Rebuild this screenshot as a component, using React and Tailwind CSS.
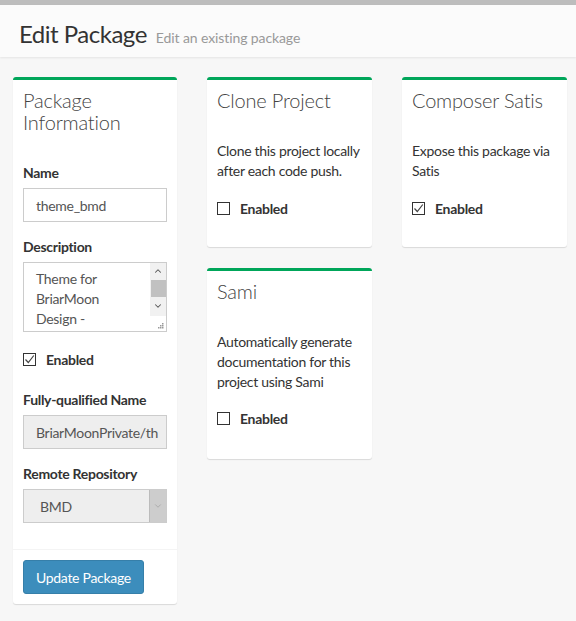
import { ChevronDown, ChevronUp } from 'lucide-react'

const FONT = { fontFamily: 'Lato, "Open Sans", sans-serif' }

function CheckBox({ checked }) {
  return (
    <span className="w-[13px] h-[13px] border border-[#333] bg-white flex items-center justify-center flex-shrink-0">
      {checked && (
        <svg width="11" height="11" viewBox="0 0 11 11" fill="none">
          <path d="M1.5 5.5 L4.3 8.5 L9.8 1.5" stroke="#444" strokeWidth="1.2" />
        </svg>
      )}
    </span>
  )
}

function EnabledRow({ checked }) {
  return (
    <div className="flex items-center gap-[10px] h-[20px]">
      <CheckBox checked={checked} />
      <span className="text-[14px] font-bold text-[#333]">Enabled</span>
    </div>
  )
}

function Box({ title, children, className = '' }) {
  return (
    <div className={`bg-white rounded-[3px] border-t-[3px] border-[#00a65a] shadow-[0_1px_1px_rgba(0,0,0,0.12)] ${className}`}>
      <div className="px-[10px] pt-[9px]">
        <h3 className="text-[20px] leading-[22px] font-light tracking-[-0.2px] text-[#444]">{title}</h3>
      </div>
      {children}
    </div>
  )
}

function Label({ children }) {
  return <p className="text-[14px] leading-[20px] font-bold text-[#333] mb-[5px]">{children}</p>
}

export default function App() {
  return (
    <div className="w-[576px] h-[621px] bg-[#f7f7f7] overflow-hidden text-[#333] tracking-[-0.3px]" style={FONT}>
      <div className="h-[5px] bg-[#bdbdbd]" />
      {/* Content header */}
      <div className="h-[52px] bg-[#fbfbfb] shadow-[0_1px_2px_rgba(0,0,0,0.08)] flex items-baseline pl-[19px] pt-[15px]">
        <h1 className="text-[24px] leading-[28px] tracking-[-0.5px] text-[#333]">Edit Package</h1>
        <small className="ml-[9px] text-[14px] tracking-[-0.1px] text-[#999]">Edit an existing package</small>
      </div>

      <div className="flex items-start gap-[30px] pl-[13px] pt-[20px]">
        {/* Package information */}
        <Box title={<>Package<br />Information</>} className="w-[164px]">
          <div className="px-[10px] pt-[30px]">
            <Label>Name</Label>
            <div className="h-[34px] border border-[#ccc] flex items-center px-[12px] text-[14px] text-[#555]">theme_bmd</div>

            <div className="mt-[15px]">
              <Label>Description</Label>
            </div>
            <div className="h-[70px] border border-[#ccc] flex">
              <div className="flex-1 pl-[12px] pt-[6px] text-[14px] leading-[20px] text-[#555] overflow-hidden">
                Theme for<br />BriarMoon<br />Design -
              </div>
              <div className="w-[16px] flex flex-col">
                <div className="h-[53px] bg-[#f1f1f1] flex flex-col items-center">
                  <ChevronUp size={10} strokeWidth={2.5} className="text-[#555] mt-[3px]" />
                  <div className="w-[15px] h-[17px] bg-[#c1c1c1] mt-[4px]" />
                  <ChevronDown size={10} strokeWidth={2.5} className="text-[#555] mt-[4px]" />
                </div>
                <div className="flex-1 flex items-end justify-end pr-[2px] pb-[2px]">
                  <svg width="7" height="7" viewBox="0 0 7 7">
                    <rect x="5" y="1" width="1.5" height="1.5" fill="#999" />
                    <rect x="3" y="3" width="1.5" height="1.5" fill="#999" />
                    <rect x="5" y="3" width="1.5" height="1.5" fill="#999" />
                    <rect x="1" y="5" width="1.5" height="1.5" fill="#999" />
                    <rect x="3" y="5" width="1.5" height="1.5" fill="#999" />
                    <rect x="5" y="5" width="1.5" height="1.5" fill="#999" />
                  </svg>
                </div>
              </div>
            </div>

            <div className="mt-[17px]">
              <EnabledRow checked />
            </div>

            <div className="mt-[21px]">
              <Label>Fully-qualified Name</Label>
            </div>
            <div className="h-[34px] border border-[#ccc] bg-[#eee] flex items-center pl-[12px] text-[14px] text-[#555] overflow-hidden whitespace-nowrap">
              BriarMoonPrivate/th
            </div>

            <div className="mt-[15px]">
              <Label>Remote Repository</Label>
            </div>
            <div className="h-[34px] border border-[#ccc] bg-[#eee] flex">
              <div className="flex-1 flex items-center pl-[16px] text-[14px] text-[#555]">BMD</div>
              <div className="w-[17px] bg-[#cdcdcd] border-l border-[#bbb] flex items-center justify-center">
                <ChevronDown size={10} strokeWidth={1.5} className="text-[#999]" />
              </div>
            </div>
          </div>
          <div className="mt-[26px] border-t border-[#f4f4f4] px-[10px] pt-[10px] pb-[10px]">
            <button className="h-[34px] px-[12px] bg-[#3c8dbc] border border-[#367fa9] rounded-[3px] text-white text-[14px]">
              Update Package
            </button>
          </div>
        </Box>

        {/* Middle column */}
        <div className="w-[165px] flex flex-col gap-[21px]">
          <Box title="Clone Project">
            <div className="px-[10px] pt-[30px] pb-[29px]">
              <p className="text-[14px] leading-[20px]">Clone this project locally after each code push.</p>
              <div className="mt-[17px]">
                <EnabledRow />
              </div>
            </div>
          </Box>
          <Box title="Sami">
            <div className="px-[10px] pt-[30px] pb-[31px]">
              <p className="text-[14px] leading-[20px]">Automatically generate documentation for this project using Sami</p>
              <div className="mt-[16px]">
                <EnabledRow />
              </div>
            </div>
          </Box>
        </div>

        {/* Right column */}
        <Box title="Composer Satis" className="w-[165px]">
          <div className="px-[10px] pt-[30px] pb-[29px]">
            <p className="text-[14px] leading-[20px]">Expose this package via Satis</p>
            <div className="mt-[17px]">
              <EnabledRow checked />
            </div>
          </div>
        </Box>
      </div>
    </div>
  )
}
